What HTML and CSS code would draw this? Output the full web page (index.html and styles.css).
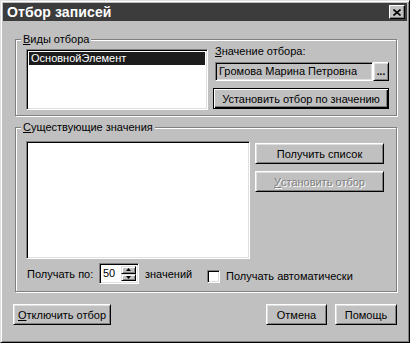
FILE: index.html
```html
<!DOCTYPE html>
<html>
<head>
<meta charset="utf-8">
<link rel="stylesheet" href="styles.css">
</head>
<body>
<div class="window">
  <div class="titlebar">
    <span class="title">Отбор записей</span>
    <div class="close">
      <svg width="8" height="7" viewBox="0 0 8 7"><path d="M0.5 0.5 L7.5 6.5 M7.5 0.5 L0.5 6.5" stroke="#000" stroke-width="1.6" fill="none"/></svg>
    </div>
  </div>
  <div class="client">
    <fieldset class="group g1">
      <legend><u>В</u>иды отбора</legend>
      <div class="g1-row">
        <div class="listbox lb1">
          <div class="item sel">ОсновнойЭлемент</div>
        </div>
        <div class="valcol">
          <div class="lbl"><u>З</u>начение отбора:</div>
          <div class="valrow">
            <div class="field ro">Громова Марина Петровна</div>
            <div class="btn dots">...</div>
          </div>
          <div class="btn default setval">Установить отбор по значению</div>
        </div>
      </div>
    </fieldset>
    <fieldset class="group g2">
      <legend><u>С</u>уществующие значения</legend>
      <div class="g2-grid">
        <div class="listbox lb2"></div>
        <div class="btncol">
          <div class="btn side">Получить список</div>
          <div class="btn side disabled"><u>У</u>становить отбор</div>
        </div>
      </div>
      <div class="fetchrow">
        <span class="fetchlbl">Получать по:</span>
        <div class="spin">
          <span class="spinval">50</span>
          <div class="spinbtns">
            <div class="sb"><svg width="5" height="3" viewBox="0 0 5 3"><path d="M2.5 0 L5 3 L0 3 Z" fill="#000"/></svg></div>
            <div class="sb"><svg width="5" height="3" viewBox="0 0 5 3"><path d="M0 0 L5 0 L2.5 3 Z" fill="#000"/></svg></div>
          </div>
        </div>
        <span class="unit">значений</span>
        <div class="check"></div>
        <span class="checklbl">Получать автоматически</span>
      </div>
    </fieldset>
    <div class="footer">
      <div class="btn foot off"><u>О</u>тключить отбор</div>
      <div class="spacer"></div>
      <div class="btn foot cancel">Отмена</div>
      <div class="btn foot help">Помощь</div>
    </div>
  </div>
</div>
</body>
</html>
```

FILE: styles.css
```css
* { box-sizing: border-box; }
html, body { margin: 0; padding: 0; background: #c0c0c0; }
body {
  font-family: "Liberation Sans", Arial, sans-serif;
  font-size: 11px;
  color: #000;
}
u { text-decoration: underline; text-underline-offset: 1px; }

.window {
  width: 410px;
  height: 343px;
  background: #c0c0c0;
  border: 1px solid;
  border-color: #dfdfdf #000 #000 #dfdfdf;
  box-shadow: inset 1px 1px #fff, inset -1px -1px #808080;
  padding: 2px;
  display: flex;
  flex-direction: column;
}

.titlebar {
  height: 18px;
  background: #3c3c3c;
  display: flex;
  align-items: center;
  justify-content: space-between;
  padding: 0 2px 0 4px;
}
.title {
  color: #fff;
  font-weight: bold;
  font-size: 14px;
  letter-spacing: 0.1px;
}
.close {
  width: 16px;
  height: 14px;
  background: #c0c0c0;
  border: 1px solid;
  border-color: #fff #000 #000 #fff;
  box-shadow: inset -1px -1px #808080;
  display: flex;
  align-items: center;
  justify-content: center;
}

.client {
  padding: 11px 10px 0 12px;
  display: flex;
  flex-direction: column;
}

.group {
  margin: 0;
  min-width: 0;
  border: 1px solid #808080;
  box-shadow: inset 1px 1px #fff, 1px 1px #fff;
}
.group legend {
  line-height: 14px;
  padding: 0 2px;
  margin-left: -5px;
  background: #c0c0c0;
}
.g1 { padding: 3px 7px 5px 10px; }
.g2 { margin-top: 4px; padding: 7px 7px 7px 10px; }

.listbox {
  background: #fff;
  border: 1px solid;
  border-color: #808080 #fff #fff #808080;
  box-shadow: inset 1px 1px #000, inset -1px -1px #dfdfdf;
  padding: 2px;
}
.g1-row { display: flex; gap: 5px; }
.lb1 { width: 182px; height: 61px; }
.item { line-height: 13px; padding-left: 2px; }
.item.sel { background: #1c1c1c; color: #fff; }

.valcol { width: 176px; display: flex; flex-direction: column; }
.lbl { line-height: 13px; margin-top: -4px; padding-left: 2px; }
.valrow { display: flex; margin-top: 4px; padding-left: 2px; }
.field {
  border: 1px solid;
  border-color: #808080 #fff #fff #808080;
  box-shadow: inset 1px 1px #000, inset -1px -1px #dfdfdf;
}
.field.ro {
  width: 158px;
  height: 19px;
  background: #c0c0c0;
  line-height: 17px;
  padding-left: 3px;
  white-space: nowrap;
  overflow: hidden;
}

.btn {
  background: #c0c0c0;
  border: 1px solid;
  border-color: #fff #000 #000 #fff;
  box-shadow: inset 1px 1px #dfdfdf, inset -1px -1px #808080;
  display: flex;
  align-items: center;
  justify-content: center;
  white-space: nowrap;
}
.btn.default {
  border-color: #000;
  box-shadow: inset 1px 1px #fff, inset -1px -1px #000, inset -2px -2px #808080;
}
.dots {
  width: 16px;
  height: 19px;
  font-weight: bold;
  font-size: 10px;
  align-items: flex-end;
  line-height: 12px;
  padding-bottom: 2px;
}
.setval { margin-top: 7px; height: 21px; }

.g2-grid {
  display: grid;
  grid-template-columns: 224px 129px;
  column-gap: 5px;
}
.lb2 { height: 118px; }
.btncol { display: flex; flex-direction: column; }
.side { height: 21px; margin-top: 2px; }
.side + .side { margin-top: 7px; }
.disabled { color: #808080; text-shadow: 1px 1px #fff; }

.fetchrow {
  display: flex;
  align-items: center;
  margin-top: 4px;
  height: 21px;
  white-space: nowrap;
}
.fetchlbl { margin-left: 1px; width: 72px; flex-shrink: 0; }
.spin {
  width: 40px;
  height: 21px;
  flex-shrink: 0;
  background: #fff;
  border: 1px solid;
  border-color: #808080 #fff #fff #808080;
  box-shadow: inset 1px 1px #000, inset -1px -1px #dfdfdf;
  display: flex;
  padding: 2px;
}
.spinval { flex: 1; line-height: 15px; padding-left: 1px; }
.spinbtns { width: 15px; display: flex; flex-direction: column; }
.sb {
  flex: 1;
  background: #c0c0c0;
  border: 1px solid;
  border-color: #dfdfdf #000 #000 #dfdfdf;
  box-shadow: inset 1px 1px #fff, inset -1px -1px #808080;
  display: flex;
  align-items: center;
  justify-content: center;
}
.unit { margin-left: 6px; width: 62px; flex-shrink: 0; }
.check {
  width: 13px;
  height: 13px;
  flex-shrink: 0;
  background: #fff;
  border: 1px solid;
  border-color: #808080 #fff #fff #808080;
  box-shadow: inset 1px 1px #000, inset -1px -1px #dfdfdf;
  margin-top: 6px;
}
.checklbl { margin-left: 6px; margin-top: 4px; }

.footer {
  display: flex;
  margin-top: 12px;
  margin-left: -2px;
  gap: 8px;
}
.spacer { flex: 1; }
.foot { height: 21px; }
.off { width: 98px; }
.cancel { width: 61px; }
.help { width: 62px; }
```
